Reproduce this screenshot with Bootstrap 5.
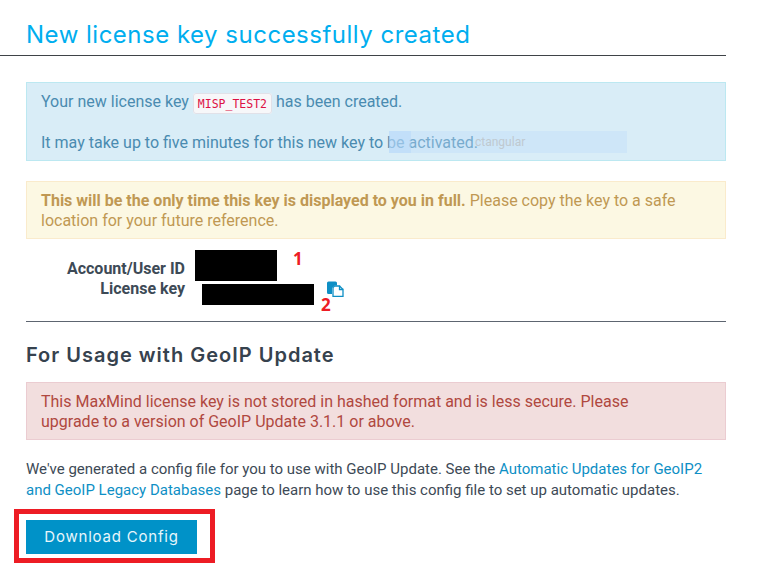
<!DOCTYPE html>
<html lang="en">
<head>
    <meta charset="UTF-8">
    <title>New license key</title>
    <link href="https://cdn.jsdelivr.net/npm/bootstrap@5.3.0/dist/css/bootstrap.min.css" rel="stylesheet">
    <style>
        body {
            font-family: Roboto, "Liberation Sans", sans-serif;
            font-size: 16px;
            line-height: 20px;
            color: #3d4a56;
            background: #fff;
        }
        .page-wrap {
            width: 726px;
            padding: 20px 0 0 26px;
            position: relative;
        }
        .page-title {
            font-family: Inter, "Open Sans", sans-serif;
            font-size: 24px;
            letter-spacing: .5px;
            line-height: 30px;
            font-weight: 400;
            color: #00aeef;
            margin: 0;
            padding-bottom: 5px;
        }
        .title-rule {
            height: 1px;
            background: #3f4347;
            margin: 0 0 26px -26px;
        }
        .note {
            border-radius: 0;
            margin: 0 0 20px;
            padding: 9px 14px 7px;
            font-size: 16px;
        }
        .note-info { background: #d9edf7; border: 1px solid #bce8f1; color: #4a8bb0; }
        .note-warn { background: #fcf8e3; border: 1px solid #faebcc; color: #c09853; }
        .note-danger { background: #f2dede; border: 1px solid #ebccd1; color: #b0483f; margin-bottom: 19px; }
        .key-code {
            font-family: "DejaVu Sans Mono", "Liberation Mono", monospace;
            font-size: 11.5px;
            line-height: 1;
            color: #dd1144;
            background: #f7f7f9;
            border: 1px solid #e1e1e8;
            border-radius: 3px;
            padding: 2.5px 4px;
        }
        .gap-line { height: 21px; }
        .snip-hint {
            position: absolute;
            left: 389px;
            top: 131px;
            width: 238px;
            height: 22px;
            background: rgba(190, 220, 250, .4);
            color: #bfc9d0;
            font-size: 12px;
            line-height: 22px;
            padding-left: 86px;
            overflow: hidden;
        }
        .snip-icon {
            position: absolute;
            left: 0;
            top: 0;
            width: 22px;
            height: 22px;
            background: rgba(180, 215, 250, .45);
        }
        .id-block { margin: 11px 0 0; height: 71px; }
        .id-row { display: flex; }
        .id-label { width: 159px; text-align: right; font-weight: 700; font-size: 16px; }
        .redact { background: #000; }
        .redact-a { width: 82px; height: 31px; margin-left: 10px; }
        .redact-b { width: 112px; height: 21px; margin-left: 17px; margin-top: 3px; }
        .id-row-a { height: 31px; align-items: flex-end; }
        .id-row-a .id-label { padding-bottom: 2px; }
        .id-row-b { align-items: flex-start; }
        .id-row-b .id-label { margin-top: -2px; }
        .copy-icon { margin: 0 0 0 13px; }
        .marker {
            position: absolute;
            font-family: "Open Sans", sans-serif;
            font-weight: 700;
            font-size: 17px;
            line-height: 18px;
            color: #ed1c24;
        }
        .marker-one { left: 293px; top: 250px; }
        .marker-two { left: 321px; top: 296px; }
        .mid-rule { height: 1px; background: #5d6570; margin: 0 0 21px; }
        .usage-title {
            font-family: Inter, "Open Sans", sans-serif;
            font-size: 20px;
            letter-spacing: 1px;
            line-height: 24px;
            font-weight: 600;
            color: #36424e;
            margin: 0 0 15px;
        }
        .body-copy { font-size: 15px; line-height: 21px; margin: 0 0 8px; }
        .body-copy a { color: #0e8fc5; text-decoration: none; }
        .download-frame {
            display: inline-block;
            border: 5px solid #ed1c24;
            padding: 6px 13px 4px 7px;
            margin-left: -12px;
            line-height: 0;
        }
        .download-btn {
            font-family: Inter, "Open Sans", sans-serif;
            font-size: 15px;
            letter-spacing: .8px;
            line-height: 34px;
            padding: 0;
            width: 171px;
            height: 34px;
            border: 0;
            border-radius: 0;
            color: #e8f6fb;
            background: #0092c8;
        }
    </style>
</head>
<body>

<div class="page-wrap">
    <h1 class="page-title">New license key successfully created</h1>
    <div class="title-rule"></div>

    <div class="alert note note-info">
        Your new license key <code class="key-code">MISP_TEST2</code> has been created.
        <div class="gap-line"></div>
        It may take up to five minutes for this new key to be activated.
    </div>
    <div class="snip-hint"><span class="snip-icon"></span>ctangular</div>

    <div class="alert note note-warn mb-0">
        <strong>This will be the only time this key is displayed to you in full.</strong> Please copy the key to a safe location for your future reference.
    </div>

    <div class="id-block">
        <div class="id-row id-row-a">
            <div class="id-label">Account/User ID</div>
            <div class="redact redact-a"></div>
        </div>
        <div class="id-row id-row-b">
            <div class="id-label">License key</div>
            <div class="redact redact-b"></div>
            <svg class="copy-icon" width="17" height="16" viewBox="0 0 17 16">
                <path d="M0 2a1.500 1.500 0 0 1 1.500-1.500h7A1.500 1.500 0 0 1 10 2v2.500H7.500L5 7v6H1.500A1.500 1.500 0 0 1 0 11.500z" fill="#0e8fc5"/>
                <path d="M7.500 5h5v3.500H16V15.400H6V6.500z" fill="#fff" stroke="#0e8fc5" stroke-width="1.300"/>
                <path d="M12.500 5L16 8.500" stroke="#0e8fc5" stroke-width="1.300"/>
            </svg>
        </div>
    </div>
    <span class="marker marker-one">1</span>
    <span class="marker marker-two">2</span>

    <div class="mid-rule"></div>
    <h2 class="usage-title">For Usage with GeoIP Update</h2>

    <div class="alert note note-danger">
        This MaxMind license key is not stored in hashed format and is less secure. Please<br>upgrade to a version of GeoIP Update 3.1.1 or above.
    </div>

    <p class="body-copy">We've generated a config file for you to use with GeoIP Update. See the <a href="#">Automatic Updates for GeoIP2 and GeoIP Legacy Databases</a> page to learn how to use this config file to set up automatic updates.</p>

    <div class="download-frame">
        <button type="button" class="btn download-btn">Download Config</button>
    </div>
</div>

<script src="https://cdn.jsdelivr.net/npm/bootstrap@5.3.0/dist/js/bootstrap.bundle.min.js"></script>
</body>
</html>
